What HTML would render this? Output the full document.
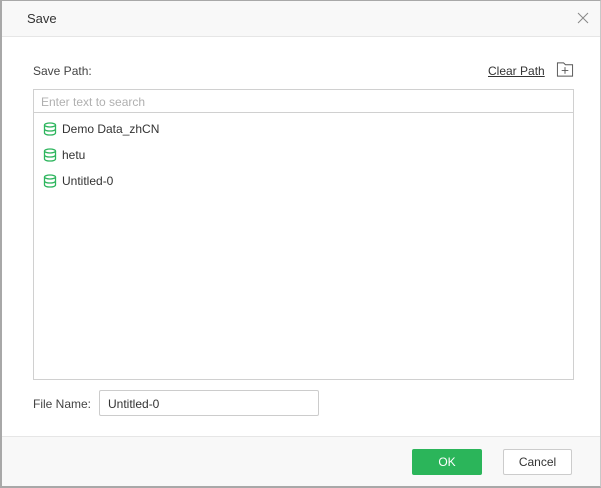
<!DOCTYPE html>
<html><head><style>
*{box-sizing:border-box;margin:0;padding:0}
body{width:601px;height:488px;background:#fff;font-family:"Liberation Sans",sans-serif;position:relative;overflow:hidden;font-size:12px;color:#333}
.frame{position:absolute;left:0;top:0;width:601px;height:488px;border:2px solid #a8a8a8;border-top:1px solid #a8a8a8;border-right:1px solid #c8c8c8}
.hdr{position:absolute;left:2px;top:1px;width:598px;height:36px;background:#f8f8f8;border-bottom:1px solid #e6e6e6}
.ftr{position:absolute;left:2px;top:436px;width:598px;height:50px;background:#f8f8f8;border-top:1px solid #e6e6e6}
.abs{position:absolute}
.tree{left:33px;top:89px;width:541px;height:291px;border:1px solid #d0d0d0}
.search{height:23px;border-bottom:1px solid #d0d0d0;color:#b0b0b0;padding:5px 0 0 7px;font-size:12px}
.item{position:absolute;left:9px;font-size:12px;color:#333}
.item svg{vertical-align:-3px;margin-right:5px}
</style></head><body>
<div class="hdr"></div>
<div class="ftr"></div>
<div class="frame"></div>
<div class="abs" style="left:27px;top:11px;font-size:13px;color:#333">Save</div>
<svg class="abs" style="left:577px;top:12px" width="12" height="12" viewBox="0 0 12 12"><path d="M1 1L11 11M11 1L1 11" stroke="#888" stroke-width="1"/></svg>
<div class="abs" style="left:33px;top:64px;color:#444">Save Path:</div>
<div class="abs" style="left:488px;top:64px;color:#333;text-decoration:underline">Clear Path</div>
<svg class="abs" style="left:556px;top:61px" width="18" height="17" viewBox="0 0 19 17"><path d="M1.5 3.5V15.5H17.5V3.5H10L8 1.5H1.5Z" fill="none" stroke="#555"/><path d="M9.5 6V13M6 9.5H13" stroke="#555"/></svg>
<div class="abs tree">
<div class="search">Enter text to search</div>
<div class="item" style="top:32px"><svg width="14" height="14" viewBox="0 0 14 14"><g fill="none" stroke="#2db55d" stroke-width="1.3"><ellipse cx="7" cy="3" rx="5.5" ry="2"/><path d="M1.5 3V11C1.5 12.2 4 13 7 13S12.5 12.2 12.5 11V3M1.5 7C1.5 8.2 4 9 7 9S12.5 8.2 12.5 7"/></g></svg>Demo Data_zhCN</div>
<div class="item" style="top:58px"><svg width="14" height="14" viewBox="0 0 14 14"><g fill="none" stroke="#2db55d" stroke-width="1.3"><ellipse cx="7" cy="3" rx="5.5" ry="2"/><path d="M1.5 3V11C1.5 12.2 4 13 7 13S12.5 12.2 12.5 11V3M1.5 7C1.5 8.2 4 9 7 9S12.5 8.2 12.5 7"/></g></svg>hetu</div>
<div class="item" style="top:84px"><svg width="14" height="14" viewBox="0 0 14 14"><g fill="none" stroke="#2db55d" stroke-width="1.3"><ellipse cx="7" cy="3" rx="5.5" ry="2"/><path d="M1.5 3V11C1.5 12.2 4 13 7 13S12.5 12.2 12.5 11V3M1.5 7C1.5 8.2 4 9 7 9S12.5 8.2 12.5 7"/></g></svg>Untitled-0</div>
</div>
<div class="abs" style="left:33px;top:397px;color:#444">File Name:</div>
<div class="abs" style="left:99px;top:390px;width:220px;height:26px;border:1px solid #ccc;border-radius:2px;padding:6px 0 0 8px;color:#333">Untitled-0</div>
<div class="abs" style="left:412px;top:449px;width:70px;height:26px;background:#2bb55a;border-radius:2px;color:#fff;text-align:center;line-height:26px">OK</div>
<div class="abs" style="left:503px;top:449px;width:69px;height:26px;background:#fff;border:1px solid #ccc;border-radius:2px;color:#333;text-align:center;line-height:24px">Cancel</div>
</body></html>
